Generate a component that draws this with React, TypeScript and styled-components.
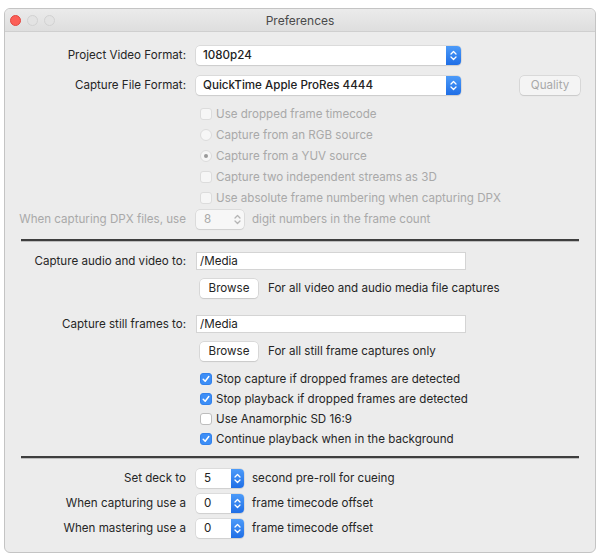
import React from 'react';
import styled, { createGlobalStyle } from 'styled-components';

const Global = createGlobalStyle`
  html, body { margin: 0; padding: 0; background: #fff; }
  body { font-family: Inter, "Noto Sans", sans-serif; font-size: 11.6px; color: #262626; }
`;

const Window = styled.div`
  margin: 8px 0 0 4px;
  width: 592px;
  height: 545px;
  box-sizing: border-box;
  background: #ececec;
  border: 1px solid #c4c4c4;
  border-radius: 6px;
  overflow: hidden;
  display: flex;
  flex-direction: column;
`;

const TitleBar = styled.div`
  height: 22px;
  flex: none;
  display: flex;
  align-items: center;
  position: relative;
  background: linear-gradient(#ebebeb, #dedede);
  border-bottom: 1px solid #cfcfcf;
`;

const Lights = styled.div`
  display: flex;
  gap: 6px;
  padding-left: 5px;
`;

const Light = styled.span<{ $c: string }>`
  width: 11px;
  height: 11px;
  border-radius: 50%;
  background: ${p => p.$c};
  border: 1px solid ${p => (p.$c === '#fc5f57' ? '#e2463f' : '#d2d2d2')};
  box-sizing: border-box;
`;

const Title = styled.div`
  position: absolute;
  left: 0;
  right: 0;
  text-align: center;
  font-size: 12px;
  color: #4a4a4a;
  pointer-events: none;
`;

const Body = styled.div`
  display: flex;
  flex-direction: column;
  padding-top: 8px;
`;

const Row = styled.div<{ $h?: number; $mt?: number }>`
  display: flex;
  align-items: center;
  height: ${p => p.$h ?? 20}px;
  margin-top: ${p => p.$mt ?? 0}px;
`;

const Label = styled.div<{ $dim?: boolean }>`
  width: 181px;
  flex: none;
  text-align: right;
  padding-right: 10px;
  white-space: nowrap;
  color: ${p => (p.$dim ? '#a9a9a9' : '#262626')};
`;

const Indent = styled.div<{ $w: number }>`
  width: ${p => p.$w}px;
  flex: none;
`;

const Select = styled.div`
  width: 265px;
  height: 19px;
  box-sizing: border-box;
  background: #fff;
  border-radius: 4px;
  box-shadow: 0 0 0 0.5px #c9c9c9, 0 1px 1px rgba(0, 0, 0, 0.12);
  display: flex;
  align-items: center;
  overflow: hidden;
`;

const SelectText = styled.span`
  flex: 1;
  padding-left: 7px;
  font-weight: 500;
  color: #222;
`;

const BlueArrows = styled.span<{ $w?: number }>`
  width: ${p => p.$w ?? 15}px;
  align-self: stretch;
  background: linear-gradient(#4c9bf9, #1f6ee6);
  display: flex;
  align-items: center;
  justify-content: center;
`;

const GrayArrows = styled.span`
  width: 13px;
  align-self: stretch;
  display: flex;
  align-items: center;
  justify-content: center;
`;

const Arrows = ({ color }: { color: string }) => (
  <svg width="7" height="11" viewBox="0 0 7 11">
    <path d="M1 4 L3.5 1.5 L6 4 M1 7 L3.5 9.5 L6 7" fill="none" stroke={color} strokeWidth="1.3" strokeLinecap="round" strokeLinejoin="round" />
  </svg>
);

const Button = styled.div<{ $dim?: boolean; $w: number }>`
  width: ${p => p.$w}px;
  height: 19px;
  box-sizing: border-box;
  border-radius: 4px;
  box-shadow: 0 0 0 0.5px #c6c6c6, 0 1px 1px rgba(0, 0, 0, 0.12);
  display: flex;
  align-items: center;
  justify-content: center;
  color: ${p => (p.$dim ? '#a8a8a8' : '#262626')};
  background: ${p => (p.$dim ? '#f4f4f4' : '#fff')};
`;

const Check = styled.span<{ $on?: boolean; $dim?: boolean; $round?: boolean }>`
  width: 12px;
  height: 12px;
  box-sizing: border-box;
  flex: none;
  border-radius: ${p => (p.$round ? '50%' : '3px')};
  background: ${p => (p.$on && !p.$dim ? '#3d8ef6' : p.$dim ? '#f6f6f6' : '#fff')};
  border: 1px solid ${p => (p.$on && !p.$dim ? '#3181ec' : p.$dim ? '#dcdcdc' : '#bdbdbd')};
  display: flex;
  align-items: center;
  justify-content: center;
  margin-right: 4px;
`;

const Dot = styled.span`
  width: 4px;
  height: 4px;
  border-radius: 50%;
  background: #9a9a9a;
`;

const Text = styled.span<{ $dim?: boolean }>`
  white-space: nowrap;
  color: ${p => (p.$dim ? '#a9a9a9' : '#262626')};
`;

const Separator = styled.div<{ $mt: number }>`
  margin: ${p => p.$mt}px 16px 0;
  height: 2px;
  background: #3e3e3e;
  border-bottom: 1px solid #bdbdbd;
`;

const Field = styled.div`
  width: 270px;
  height: 18px;
  box-sizing: border-box;
  background: #fff;
  border: 1px solid #d4d4d4;
  padding-left: 3px;
  display: flex;
  align-items: center;
  color: #222;
`;

const Stepper = styled.div<{ $dim?: boolean }>`
  width: 48px;
  height: 19px;
  box-sizing: border-box;
  background: ${p => (p.$dim ? '#f7f7f7' : '#fff')};
  border-radius: 4px;
  box-shadow: 0 0 0 0.5px #cbcbcb, 0 1px 1px rgba(0, 0, 0, 0.1);
  display: flex;
  align-items: center;
  overflow: hidden;
  color: ${p => (p.$dim ? '#a9a9a9' : '#222')};
  margin-right: 8px;
`;

const StepVal = styled.span`
  flex: 1;
  padding-left: 8px;
`;

const Tick = () => (
  <svg width="8" height="8" viewBox="0 0 8 8">
    <path d="M1.2 4.3 L3.2 6.3 L6.8 1.5" fill="none" stroke="#fff" strokeWidth="1.5" strokeLinecap="round" strokeLinejoin="round" />
  </svg>
);

const CheckRow = ({ label, on, dim, radio }: { label: string; on?: boolean; dim?: boolean; radio?: boolean }) => (
  <Row $h={radio || dim ? 21 : 20}>
    <Indent $w={195} />
    <Check $on={on} $dim={dim} $round={radio}>
      {radio && on ? <Dot /> : on && !dim ? <Tick /> : null}
    </Check>
    <Text $dim={dim}>{label}</Text>
  </Row>
);

const StepRow = ({ label, value, after }: { label: string; value: string; after: string }) => (
  <Row $h={20} $mt={5}>
    <Label>{label}</Label>
    <Stepper>
      <StepVal>{value}</StepVal>
      <BlueArrows $w={13}>
        <Arrows color="#fff" />
      </BlueArrows>
    </Stepper>
    <Text>{after}</Text>
  </Row>
);

export default function App() {
  return (
    <>
      <Global />
      <Window>
        <TitleBar>
          <Lights>
            <Light $c="#fc5f57" />
            <Light $c="#e3e3e3" />
            <Light $c="#e3e3e3" />
          </Lights>
          <Title>Preferences</Title>
        </TitleBar>
        <Body>
          <Row $h={30}>
            <Label>Project Video Format:</Label>
            <Select>
              <SelectText>1080p24</SelectText>
              <BlueArrows>
                <Arrows color="#fff" />
              </BlueArrows>
            </Select>
          </Row>
          <Row $h={30}>
            <Label>Capture File Format:</Label>
            <Select>
              <SelectText>QuickTime Apple ProRes 4444</SelectText>
              <BlueArrows>
                <Arrows color="#fff" />
              </BlueArrows>
            </Select>
            <Indent $w={59} />
            <Button $dim $w={60}>Quality</Button>
          </Row>
          <Row $h={3} />
          <CheckRow dim label="Use dropped frame timecode" />
          <CheckRow dim radio label="Capture from an RGB source" />
          <CheckRow dim radio on label="Capture from a YUV source" />
          <CheckRow dim label="Capture two independent streams as 3D" />
          <CheckRow dim label="Use absolute frame numbering when capturing DPX" />
          <Row $h={22}>
            <Label $dim>When capturing DPX files, use</Label>
            <Stepper $dim>
              <StepVal>8</StepVal>
              <GrayArrows>
                <Arrows color="#b5b5b5" />
              </GrayArrows>
            </Stepper>
            <Text $dim>digit numbers in the frame count</Text>
          </Row>
          <Separator $mt={9} />
          <Row $h={20} $mt={9}>
            <Label>Capture audio and video to:</Label>
            <Field>/Media</Field>
          </Row>
          <Row $h={20} $mt={7}>
            <Indent $w={195} />
            <Button $w={58}>Browse</Button>
            <Indent $w={10} />
            <Text>For all video and audio media file captures</Text>
          </Row>
          <Row $h={20} $mt={16}>
            <Label>Capture still frames to:</Label>
            <Field>/Media</Field>
          </Row>
          <Row $h={20} $mt={7}>
            <Indent $w={195} />
            <Button $w={58}>Browse</Button>
            <Indent $w={10} />
            <Text>For all still frame captures only</Text>
          </Row>
          <Row $h={8} />
          <CheckRow on label="Stop capture if dropped frames are detected" />
          <CheckRow on label="Stop playback if dropped frames are detected" />
          <CheckRow label="Use Anamorphic SD 16:9" />
          <CheckRow on label="Continue playback when in the background" />
          <Separator $mt={7} />
          <Row $h={4} />
          <StepRow label="Set deck to" value="5" after="second pre-roll for cueing" />
          <StepRow label="When capturing use a" value="0" after="frame timecode offset" />
          <StepRow label="When mastering use a" value="0" after="frame timecode offset" />
        </Body>
      </Window>
    </>
  );
}
